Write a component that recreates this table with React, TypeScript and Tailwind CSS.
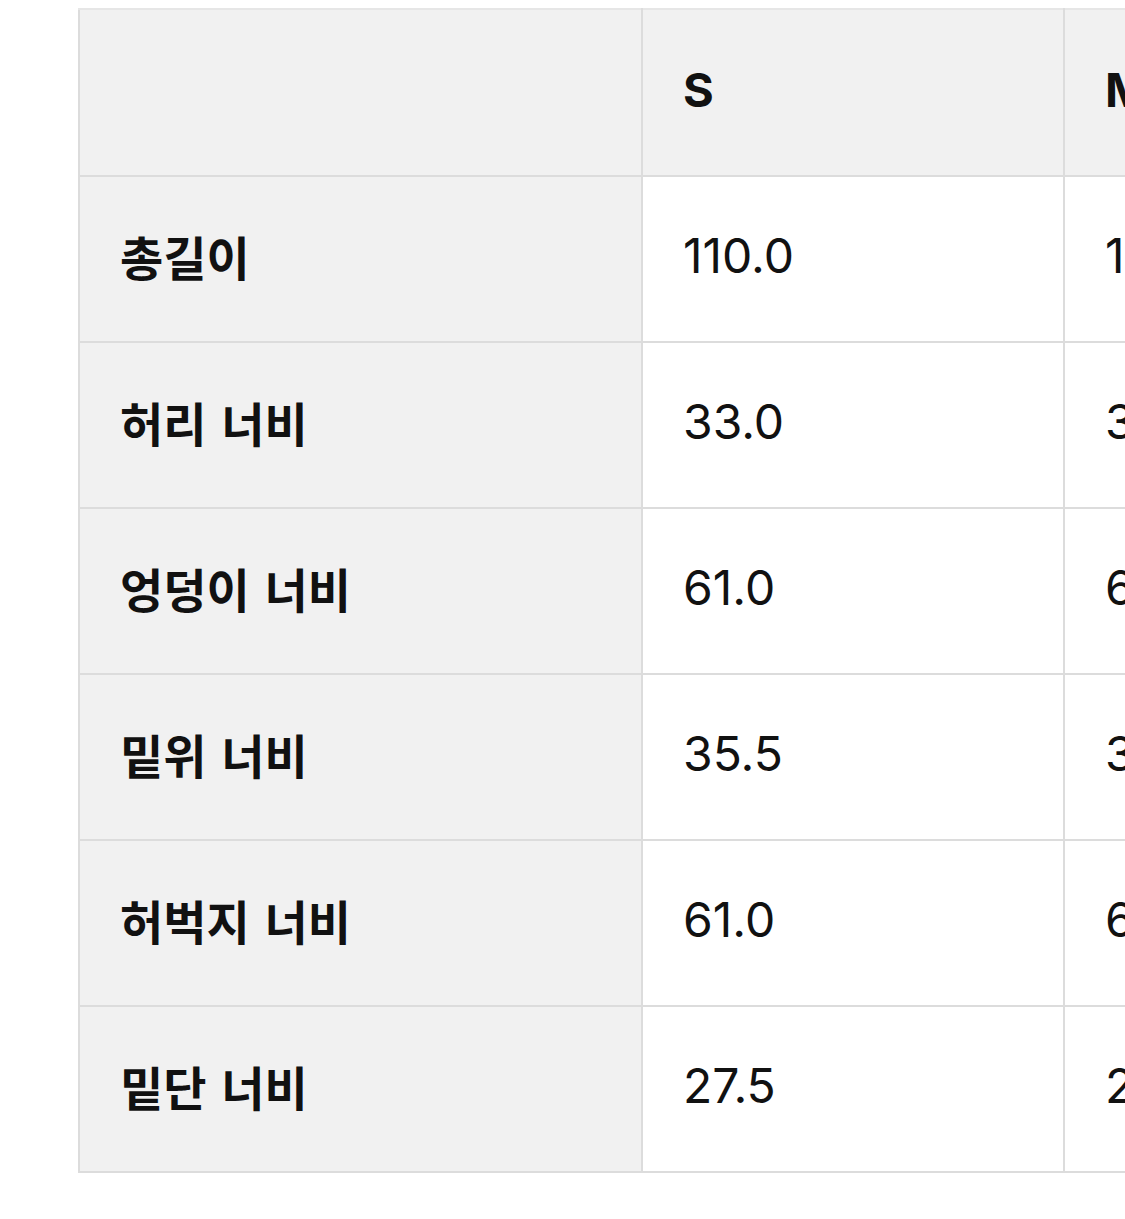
import React from "react";

const rows: [string, string, string][] = [
  ["총길이", "110.0", "112.0"],
  ["허리 너비", "33.0", "35.0"],
  ["엉덩이 너비", "61.0", "63.0"],
  ["밑위 너비", "35.5", "36.5"],
  ["허벅지 너비", "61.0", "63.0"],
  ["밑단 너비", "27.5", "28.5"],
];

export default function App() {
  return (
    <div
      className="w-[1125px] h-[1219px] overflow-hidden bg-white pl-[78px] pt-[8px]"
      style={{ fontFamily: "Inter, 'Noto Sans CJK KR', sans-serif" }}
    >
      <table className="border-collapse table-fixed w-[1408px] text-[#111]">
        <colgroup>
          <col className="w-[563px]" />
          <col className="w-[422px]" />
          <col className="w-[423px]" />
        </colgroup>
        <thead>
          <tr className="h-[167px] bg-[#f1f1f1]">
            <th className="border-2 border-[#dcdcdc] border-t-[#e6e6e6]"></th>
            <th className="border-2 border-[#dcdcdc] border-t-[#e6e6e6] text-left pl-[40px] pb-[4px] text-[47px] font-bold">S</th>
            <th className="border-2 border-[#dcdcdc] border-t-[#e6e6e6] text-left pl-[40px] pb-[4px] text-[47px] font-bold">M</th>
          </tr>
        </thead>
        <tbody>
          {rows.map(([label, s, m]) => (
            <tr key={label} className="h-[166px]">
              <td
                className="border-2 border-[#dcdcdc] bg-[#f1f1f1] pl-[40px] pb-[6px] text-[47px] font-semibold tracking-[0px] [word-spacing:4px]"
                style={{ fontFamily: "'Noto Sans CJK KR', sans-serif" }}
              >
                {label}
              </td>
              <td className="border-2 border-[#dcdcdc] bg-white pl-[40px] pb-[6px] text-[48px] font-normal tracking-[0px]">{s}</td>
              <td className="border-2 border-[#dcdcdc] bg-white pl-[40px] pb-[6px] text-[48px] font-normal tracking-[0px]">{m}</td>
            </tr>
          ))}
        </tbody>
      </table>
    </div>
  );
}
